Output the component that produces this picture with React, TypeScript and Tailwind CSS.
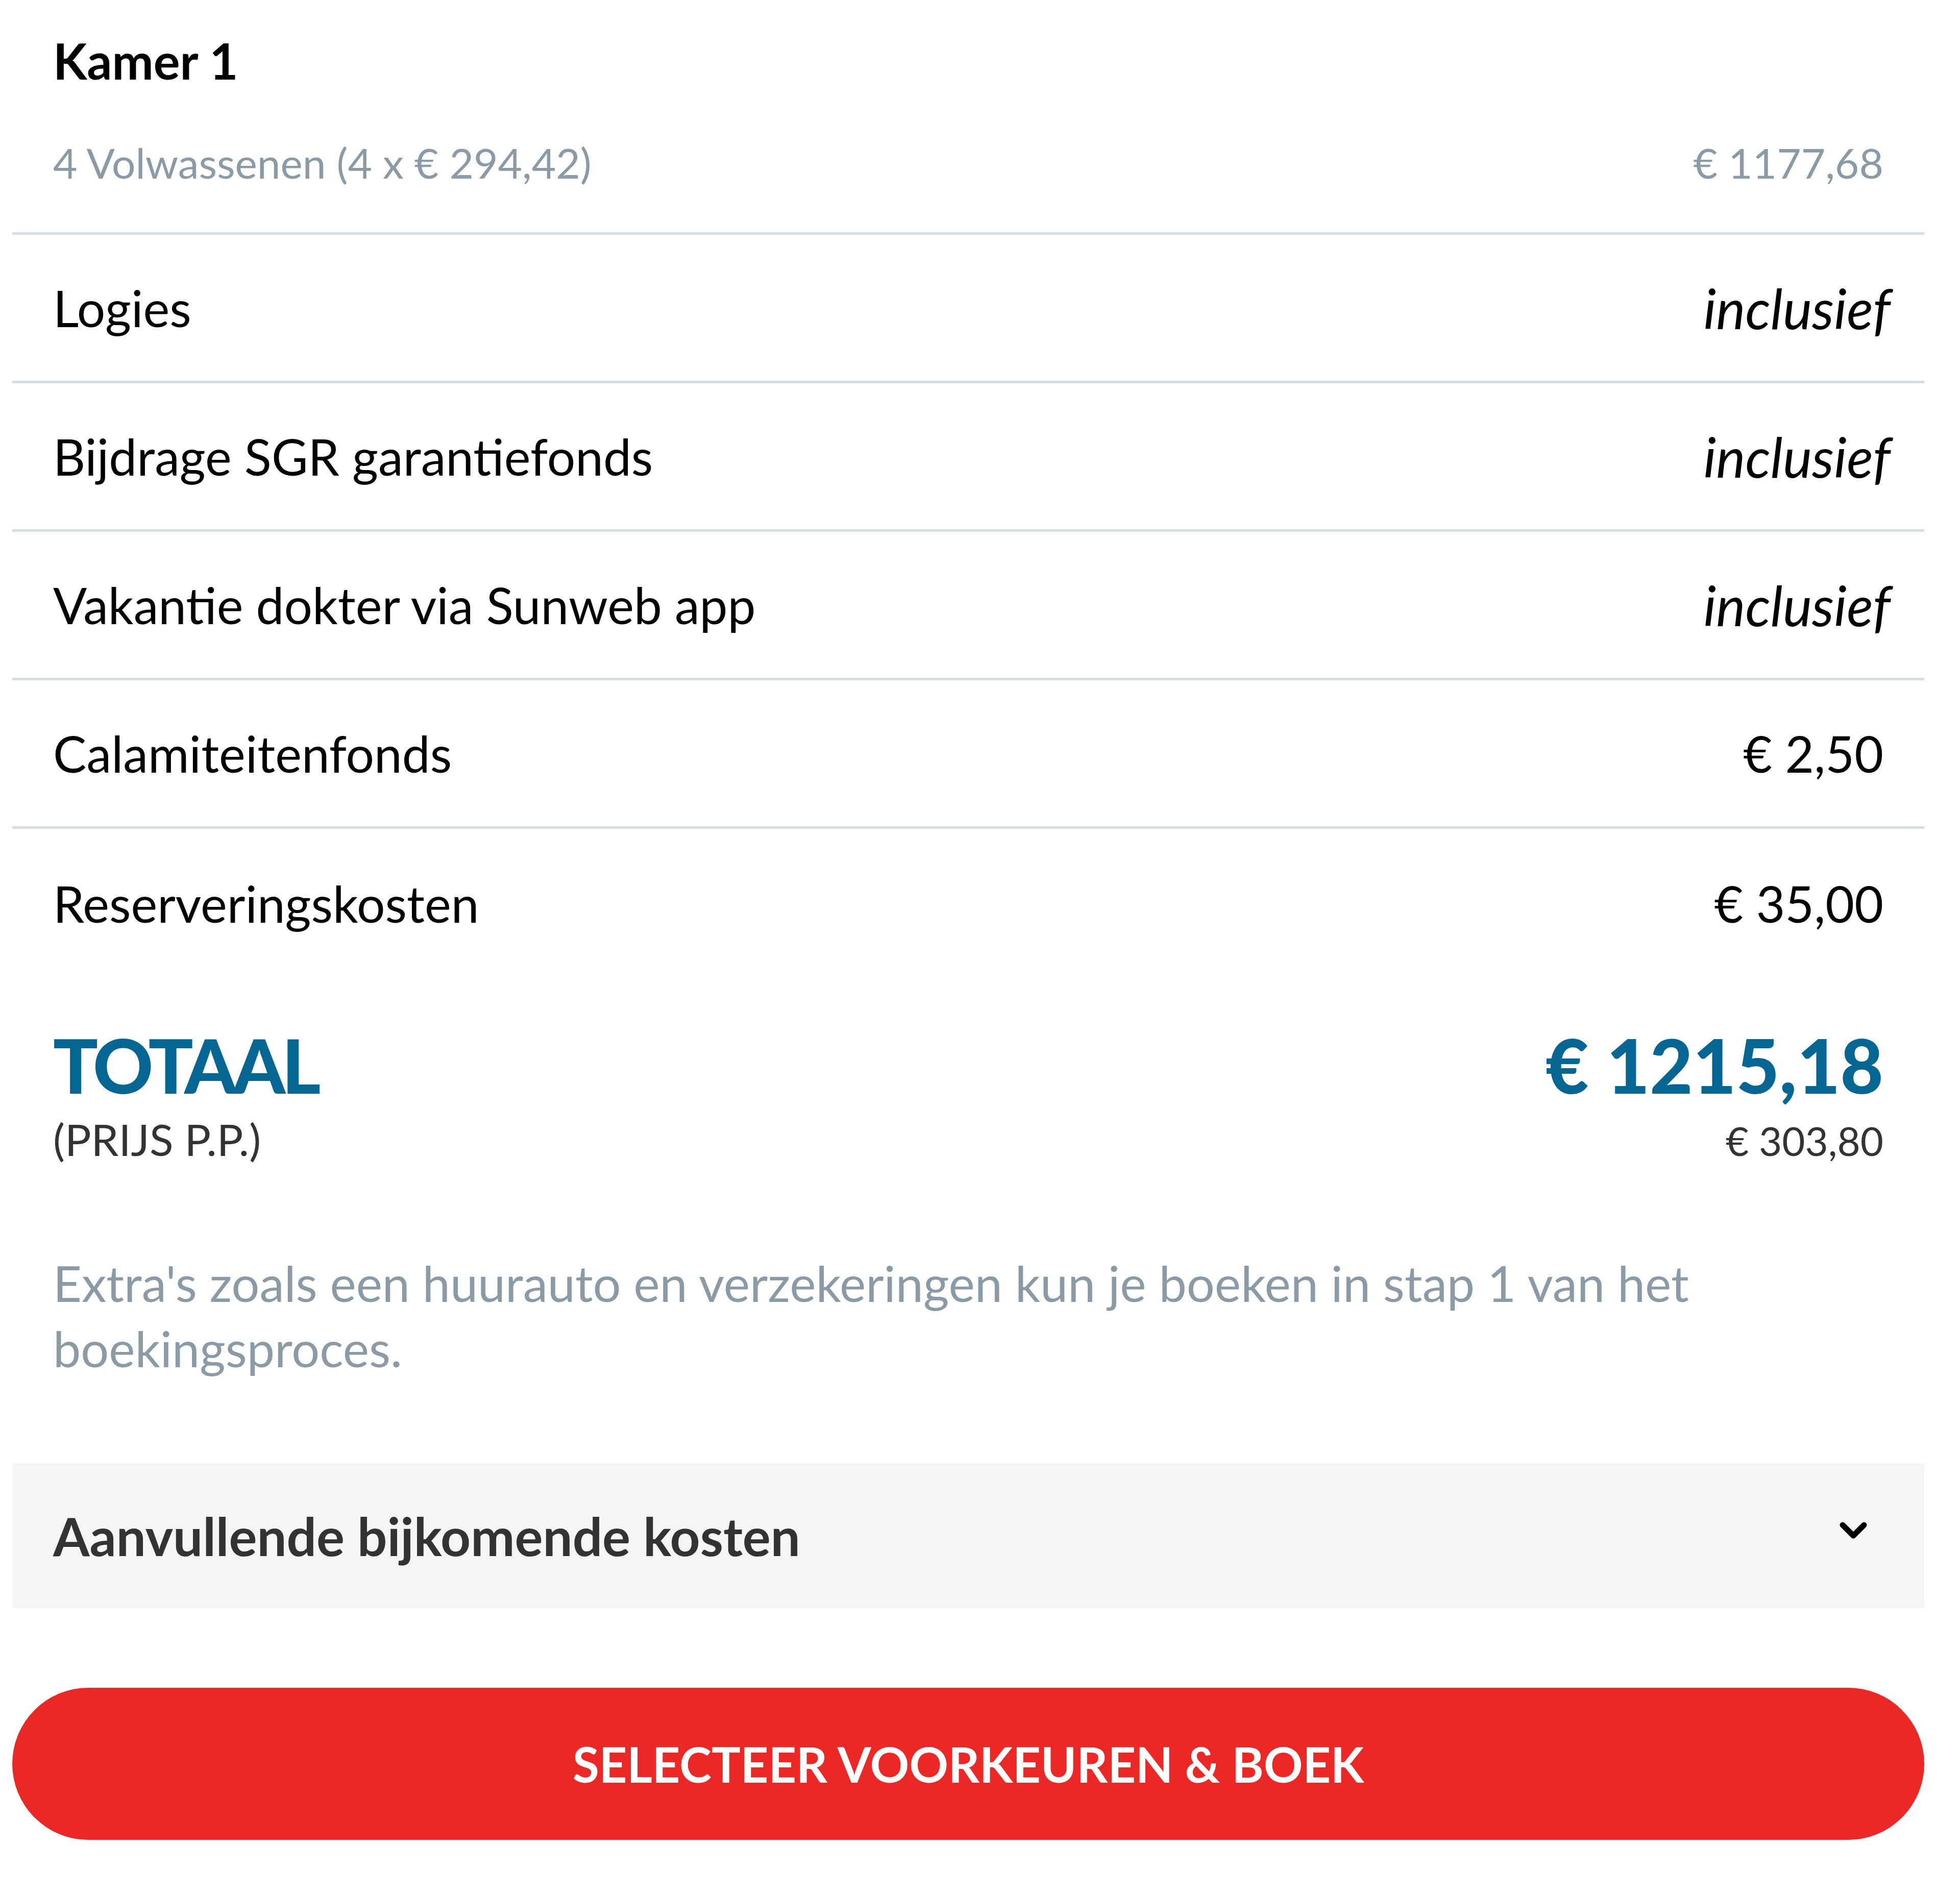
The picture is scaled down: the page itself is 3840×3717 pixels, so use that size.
import { ReactNode } from 'react';

const font = "font-['Lato','Source_Sans_Pro','Liberation_Sans',sans-serif]";

// één regel met label links en bedrag rechts
function Row({ label, value, italic, last }: { label: string; value: string; italic?: boolean; last?: boolean }) {
  return (
    <div
      className={`flex h-[291px] items-center justify-between px-[80px] ${last ? '' : 'border-b-[5px] border-[#d7dee2]'}`}
    >
      <span className="text-[98px] leading-[118px] text-black">{label}</span>
      {italic ? (
        <span className="-mr-[14px] text-[108px] leading-[118px] italic text-black">{value}</span>
      ) : (
        <span className="text-[98px] leading-[118px] text-black">{value}</span>
      )}
    </div>
  );
}

function Chevron() {
  return (
    <svg width="54" height="34" viewBox="0 0 54 34" className="mb-[20px]">
      <polyline
        points="6,6 27,27 48,6"
        fill="none"
        stroke="#000"
        strokeWidth="11"
        strokeLinecap="round"
        strokeLinejoin="round"
      />
    </svg>
  );
}

function Section({ children, className = '' }: { children: ReactNode; className?: string }) {
  return <div className={`px-[80px] ${className}`}>{children}</div>;
}

export default function App() {
  return (
    <div className={`w-[3840px] bg-white pb-[113px] ${font}`}>
      <div className="ml-[24px] w-[3746px]">
        {/* kamer kop */}
        <div className="border-b-[5px] border-[#d7dee2] px-[80px] pt-[61px] pb-[87px]">
          <div className="text-[97px] leading-[115px] font-bold text-black">Kamer 1</div>
          <div className="mt-[92px] flex justify-between text-[82px] leading-[100px] text-[#8a9ba6]">
            <span>4 Volwassenen (4 x € 294,42)</span>
            <span>€ 1177,68</span>
          </div>
        </div>

        {/* kostenregels */}
        <Row label="Logies" value="inclusief" italic />
        <Row label="Bijdrage SGR garantiefonds" value="inclusief" italic />
        <Row label="Vakantie dokter via Sunweb app" value="inclusief" italic />
        <Row label="Calamiteitenfonds" value="€ 2,50" />
        <Row label="Reserveringskosten" value="€ 35,00" last />

        {/* totaal */}
        <Section className="mt-[84px]">
          <div className="flex items-baseline justify-between text-[146px] leading-[175px] font-black text-[#056693]">
            <span className="tracking-[-7px]">TOTAAL</span>
            <span>€ 1215,18</span>
          </div>
          <div className="mt-[10px] flex items-baseline justify-between leading-[96px] text-[#333]">
            <span className="text-[86px]">(PRIJS P.P.)</span>
            <span className="text-[78px]">€ 303,80</span>
          </div>
        </Section>

        <Section className="mt-[167px]">
          <p className="text-[97px] leading-[128px] text-[#8a9ba6]">
            Extra's zoals een huurauto en verzekeringen kun je boeken in stap 1 van het boekingsproces.
          </p>
        </Section>

        {/* accordion */}
        <button className="mt-[161px] flex h-[284px] w-full items-center justify-between bg-[#f5f5f5] pl-[80px] pr-[112px] text-left">
          <span className="text-[103px] leading-[120px] font-bold text-[#333]">Aanvullende bijkomende kosten</span>
          <Chevron />
        </button>

        {/* boekknop */}
        <button className="mt-[156px] flex h-[298px] w-full items-center justify-center rounded-full bg-[#ea2926] text-[95px] leading-[115px] font-bold text-white">
          SELECTEER VOORKEUREN &amp; BOEK
        </button>
      </div>
    </div>
  );
}
